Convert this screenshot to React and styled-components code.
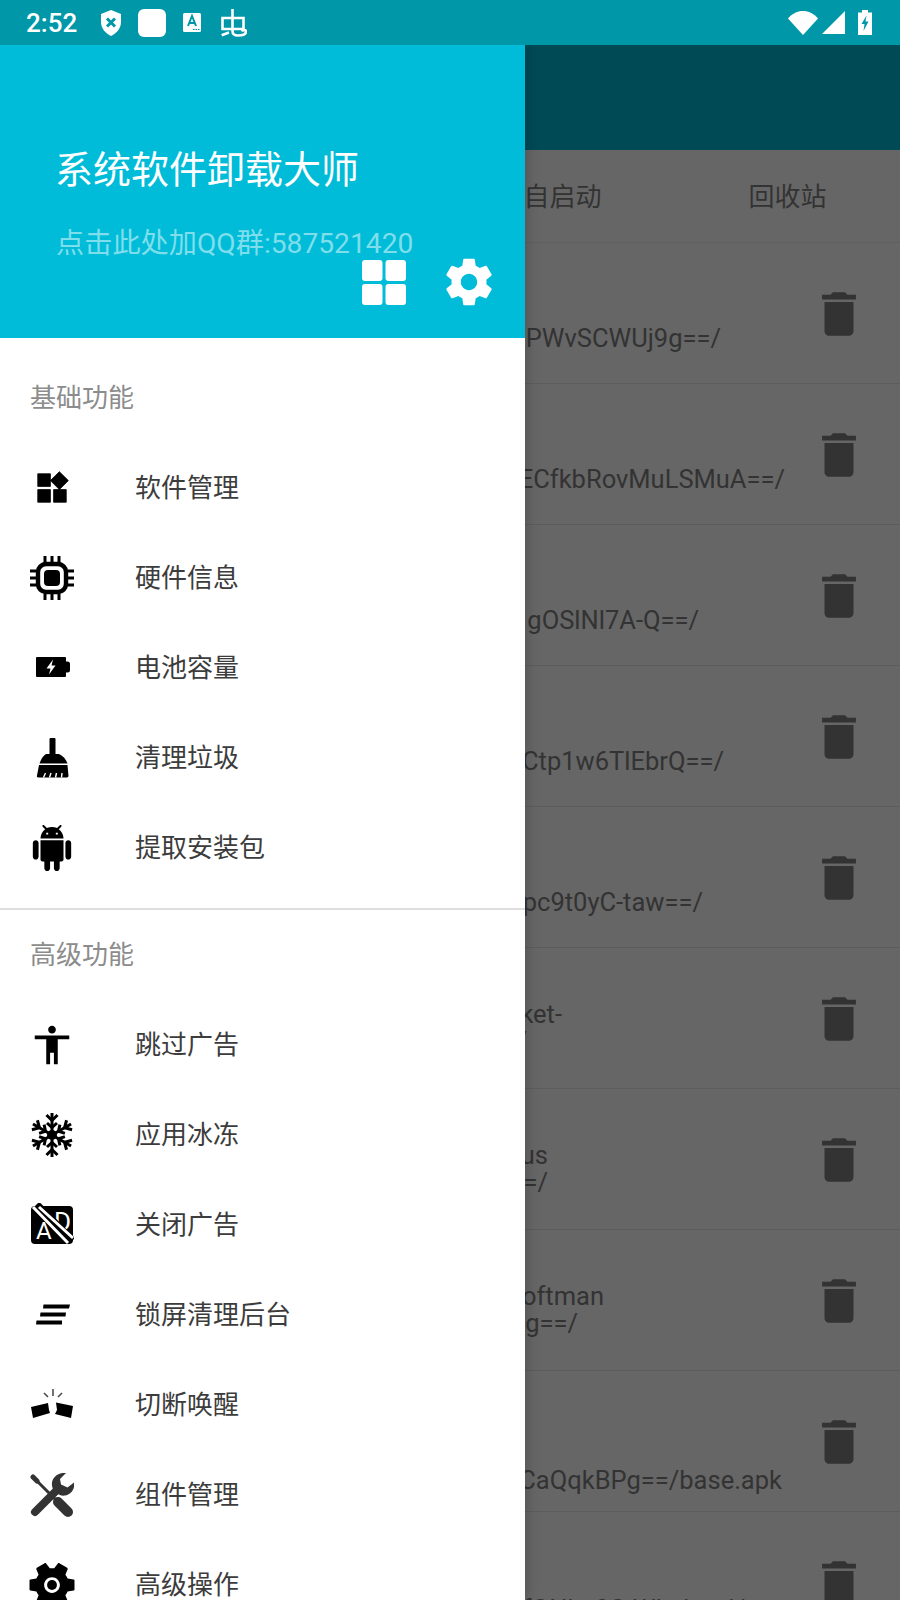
import React from "react";
import styled, { createGlobalStyle } from "styled-components";

const Global = createGlobalStyle`
  html, body { margin: 0; padding: 0; background: #666666; }
  * { box-sizing: border-box; }
`;

const FONT = `Roboto, "Noto Sans CJK SC", "Liberation Sans", sans-serif`;

const Screen = styled.div`
  position: relative;
  width: 900px;
  height: 1600px;
  overflow: hidden;
  background: #666666;
  font-family: ${FONT};
`;

const StatusBar = styled.div`
  height: 45px;
  background: #0098a9;
  display: flex;
  align-items: center;
  padding: 0 28px 0 26px;
  color: #fff;
`;

const Clock = styled.span`
  font-size: 26px;
  font-weight: 500;
  width: 75px;
`;

const StatusLeft = styled.div`
  display: flex;
  align-items: center;
  gap: 17px;
  flex: 1;
`;

const StatusRight = styled.div`
  display: flex;
  align-items: center;
  gap: 4px;
`;

const Svg = styled.svg`
  display: block;
  flex: none;
`;

const Toolbar = styled.div`
  height: 105px;
  background: #004a56;
`;

const Tabs = styled.div`
  height: 93px;
  display: grid;
  grid-template-columns: repeat(4, 225px);
  align-items: center;
  border-bottom: 1px solid #606060;
`;

const Tab = styled.div`
  font-size: 26px;
  color: #333;
  text-align: center;
  padding-bottom: 3px;
`;

const Row = styled.div`
  height: 141px;
  display: flex;
  align-items: flex-start;
  border-bottom: 1.5px solid #5c5c5c;
`;

const PathBlock = styled.div`
  flex: none;
  width: ${(p) => p.$end}px;
  padding-top: ${(p) => p.$top}px;
  text-align: right;
  font-size: 25.5px;
  line-height: 27px;
  color: #333;
  white-space: nowrap;
`;

const PathLine = styled.div`
  margin-right: ${(p) => p.$inset || 0}px;
`;

const TrashSlot = styled.div`
  margin-left: auto;
  margin-right: 32px;
  margin-top: 1.5px;
  align-self: center;
`;

const Drawer = styled.aside`
  position: absolute;
  top: 45px;
  left: 0;
  bottom: 0;
  width: 525px;
  background: #fff;
  box-shadow: 2px 0 12px rgba(0, 0, 0, 0.18);
  clip-path: inset(0 -24px 0 0);
  overflow: hidden;
`;

const DrawerHeader = styled.header`
  height: 293px;
  background: #00bcd8;
  padding: 100px 0 0 55px;
`;

const AppTitle = styled.div`
  font-size: 38px;
  line-height: 50px;
  color: #fff;
  white-space: nowrap;
`;

const QQLine = styled.div`
  margin-top: 35px;
  margin-left: 1px;
  font-size: 28.2px;
  line-height: 28px;
  color: #7fdeec;
  white-space: nowrap;
`;

const HeaderActions = styled.div`
  display: flex;
  align-items: center;
  justify-content: flex-end;
  gap: 35px;
  padding-right: 28px;
  margin-top: -4px;
`;

const Section = styled.section`
  padding-top: ${(p) => p.$top}px;
`;

const SectionTitle = styled.div`
  height: 90px;
  display: flex;
  align-items: center;
  padding: 0 0 6px 30px;
  font-size: 26px;
  color: #8c8c8c;
`;

const Item = styled.div`
  height: 90px;
  display: flex;
  align-items: center;
  font-size: 26px;
  color: #3c3c3c;
`;

const IconSlot = styled.div`
  width: 104px;
  height: 90px;
  display: flex;
  align-items: center;
  justify-content: center;
  flex: none;
`;

const ItemLabel = styled.span`
  margin-left: 31px;
  margin-bottom: 6px;
`;

const Divider = styled.div`
  height: 2px;
  margin-top: 15px;
  background: #dedede;
`;

const SETTINGS =
  "M19.43 12.98c.04-.32.07-.64.07-.98s-.03-.66-.07-.98l2.11-1.65c.19-.15.24-.42.12-.64l-2-3.46c-.12-.22-.39-.3-.61-.22l-2.49 1c-.52-.4-1.08-.73-1.69-.98l-.38-2.65C14.46 2.18 14.25 2 14 2h-4c-.25 0-.46.18-.49.42l-.38 2.65c-.61.25-1.17.59-1.69.98l-2.49-1c-.23-.09-.49 0-.61.22l-2 3.46c-.13.22-.07.49.12.64l2.11 1.65c-.04.32-.07.65-.07.98s.03.66.07.98l-2.11 1.65c-.19.15-.24.42-.12.64l2 3.46c.12.22.39.3.61.22l2.49-1c.52.4 1.08.73 1.69.98l.38 2.65c.03.24.24.42.49.42h4c.25 0 .46-.18.49-.42l.38-2.65c.61-.25 1.17-.59 1.69-.98l2.49 1c.23.09.49 0 .61-.22l2-3.46c.12-.22.07-.49-.12-.64l-2.11-1.65zM12 15.5c-1.93 0-3.5-1.57-3.5-3.5s1.57-3.5 3.5-3.5 3.5 1.57 3.5 3.5-1.57 3.5-3.5 3.5z";

const Shield = () => (
  <Svg width="20" height="26" viewBox="0 0 20 26">
    <path d="M10 0 L20 4 V12 C20 19 15 23.5 10 26 C5 23.5 0 19 0 12 V4 Z" fill="#fff" />
    <path d="M6 8.5 L14 16.5 M14 8.5 L6 16.5" stroke="#0098a9" strokeWidth="3" />
  </Svg>
);

const WhiteTile = () => (
  <Svg width="28" height="28" viewBox="0 0 28 28">
    <rect width="28" height="28" rx="6" fill="#fff" />
  </Svg>
);

const StoreIcon = () => (
  <Svg width="18" height="19" viewBox="0 0 18 19">
    <rect width="18" height="19" rx="1.5" fill="#fff" />
    <path d="M5 13 L9 3 L13 13 M6.4 10 H11.6" fill="none" stroke="#0098a9" strokeWidth="2" />
    <path d="M10 16.5 h1.5 M12.5 16.5 h1.5 M15 16.5 h1.5" stroke="#0098a9" strokeWidth="1.2" />
  </Svg>
);

const BugIcon = () => (
  <Svg width="26" height="28" viewBox="0 0 26 28" style={{ marginLeft: 3 }}>
    <path
      d="M1.5 9 H22.5 V20 H1.5 Z M11.5 0 V22 C11.5 25 13.5 26.5 17 26.5 C21 26.5 25 25.5 25 22.5 C25 20.5 22 20.5 21 22.5 M0.7 26.3 L8 23.5"
      fill="none"
      stroke="#fff"
      strokeWidth="2.6"
    />
  </Svg>
);

const Wifi = () => (
  <Svg width="30" height="24" viewBox="0 0 30 24">
    <path d="M0 7.5 C8 -2.5 22 -2.5 30 7.5 L15 24 Z" fill="#fff" />
  </Svg>
);

const Signal = () => (
  <Svg width="23" height="23" viewBox="0 0 23 23">
    <path d="M23 0 V23 H0 Z" fill="#fff" />
  </Svg>
);

const BatteryStatus = () => (
  <Svg width="14" height="25" viewBox="0 0 14 25" style={{ marginLeft: 9 }}>
    <path d="M4 0 H10 V2.5 H14 V25 H0 V2.5 H4 Z" fill="#fff" />
    <path d="M8.5 5.5 L3.5 14 H6.5 L5.5 21 L10.5 11.5 H7.5 Z" fill="#0098a9" />
  </Svg>
);

const Trash = () => (
  <Svg width="58" height="58" viewBox="0 0 24 24">
    <path
      d="M6 19c0 1.1.9 2 2 2h8c1.1 0 2-.9 2-2V7H6v12zM19 4h-3.5l-1-1h-5l-1 1H5v2h14V4z"
      fill="#333"
    />
  </Svg>
);

const GridIcon = () => (
  <Svg width="44" height="45" viewBox="0 0 44 45">
    <rect x="0" y="0" width="20.5" height="21" rx="3" fill="#fff" />
    <rect x="23.5" y="0" width="20.5" height="21" rx="3" fill="#fff" />
    <rect x="0" y="24" width="20.5" height="21" rx="3" fill="#fff" />
    <rect x="23.5" y="24" width="20.5" height="21" rx="3" fill="#fff" />
  </Svg>
);

const GearIcon = () => (
  <Svg width="56" height="56" viewBox="0 0 24 24">
    <path d={SETTINGS} fill="#fff" />
  </Svg>
);

const WidgetsIcon = () => (
  <Svg width="38" height="38" viewBox="0 0 24 24">
    <path
      d="M13 13v8h8v-8h-8zM3 21h8v-8H3v8zM3 3v8h8V3H3zm13.66-1.31L11 7.34 16.66 13l5.66-5.66-5.66-5.65z"
      fill="#000"
      stroke="#000"
      strokeWidth="0.5"
      strokeLinejoin="round"
    />
  </Svg>
);

const ChipIcon = () => (
  <Svg width="44" height="44" viewBox="0 0 44 44">
    <rect x="8" y="8" width="28" height="28" rx="8" fill="none" stroke="#000" strokeWidth="4.4" />
    <rect x="14" y="14" width="16" height="16" rx="4" fill="#000" />
    <path
      d="M15 0.5 V7 M22 0.5 V7 M29 0.5 V7 M15 37 V43.5 M22 37 V43.5 M29 37 V43.5 M0.5 15 H7 M0.5 22 H7 M0.5 29 H7 M37 15 H43.5 M37 22 H43.5 M37 29 H43.5"
      stroke="#000"
      strokeWidth="3"
      strokeLinecap="round"
    />
  </Svg>
);

const BatteryIcon = () => (
  <Svg width="44" height="44" viewBox="0 0 44 44">
    <rect x="6" y="11" width="30" height="20" rx="1" fill="#000" />
    <rect x="34" y="15.5" width="6" height="11" rx="2.5" fill="#000" />
    <path d="M23 13.5 L16.5 22.5 H20.5 L19 28.5 L25.5 19.5 H21.5 Z" fill="#fff" />
  </Svg>
);

const BroomIcon = () => (
  <Svg width="44" height="44" viewBox="0 0 44 44">
    <rect x="19.5" y="2" width="6" height="20" rx="1" fill="#000" />
    <path d="M16 18 H29 C33 20 36 23 37.5 27.5 H9.5 C11 23 13 20 16 18 Z" fill="#000" />
    <path d="M9 29 H37.5 L38.5 40 C38.5 41 37 41.5 36 41.5 H8.5 C7 41.5 6.5 40.5 7 39.5 Z" fill="#000" />
    <path
      d="M13.5 41.5 L15.5 37 M19.5 41.5 L21 37 M25.5 41.5 L26.5 37 M31.5 41.5 L32 37"
      stroke="#fff"
      strokeWidth="1.4"
    />
  </Svg>
);

const AndroidIcon = () => (
  <Svg width="46" height="46" viewBox="0 0 24 24">
    <path
      d="M6 18c0 .55.45 1 1 1h1v3.5c0 .83.67 1.5 1.5 1.5s1.5-.67 1.5-1.5V19h2v3.5c0 .83.67 1.5 1.5 1.5s1.5-.67 1.5-1.5V19h1c.55 0 1-.45 1-1V8H6v10zM3.5 8C2.67 8 2 8.67 2 9.5v7c0 .83.67 1.5 1.5 1.5S5 17.33 5 16.5v-7C5 8.67 4.33 8 3.5 8zm17 0c-.83 0-1.5.67-1.5 1.5v7c0 .83.67 1.5 1.5 1.5s1.5-.67 1.5-1.5v-7c0-.83-.67-1.5-1.5-1.5zm-4.97-5.84l1.3-1.3c.2-.2.2-.51 0-.71-.2-.2-.51-.2-.71 0l-1.48 1.48C13.85 1.23 12.95 1 12 1c-.96 0-1.86.23-2.66.63L7.85.15c-.2-.2-.51-.2-.71 0-.2.2-.2.51 0 .71l1.31 1.31C6.97 3.26 6 5.01 6 7h12c0-1.99-.97-3.75-2.47-4.84zM10 5H9V4h1v1zm5 0h-1V4h1v1z"
      fill="#000"
    />
  </Svg>
);

const PersonIcon = () => (
  <Svg width="46" height="46" viewBox="0 0 24 24">
    <path
      d="M12 2c1.1 0 2 .9 2 2s-.9 2-2 2-2-.9-2-2 .9-2 2-2zm9 5v2h-6v13h-2v-6h-2v6H9V9H3V7h18z"
      fill="#000"
    />
  </Svg>
);

const SnowIcon = () => (
  <Svg width="44" height="46" viewBox="-22 -23 44 46">
    {[0, 60, 120, 180, 240, 300].map((a) => (
      <g key={a} transform={`rotate(${a})`} stroke="#000" strokeWidth="3" fill="none">
        <path d="M0 0 V-22" />
        <path d="M-5.5 -20 L0 -14.5 L5.5 -20" />
        <path d="M-5 -12 L0 -7.5 L5 -12" />
      </g>
    ))}
    <circle r="5" fill="#000" />
  </Svg>
);

const AdOffIcon = () => (
  <Svg width="44" height="44" viewBox="0 0 44 44">
    <rect x="1" y="3" width="42" height="38" rx="4" fill="#000" />
    <text x="6" y="36" fontFamily="Roboto, sans-serif" fontSize="24" fill="#fff">A</text>
    <text x="24" y="28" fontFamily="Roboto, sans-serif" fontSize="26" fill="#fff">D</text>
    <path d="M6 2 L42 38" stroke="#000" strokeWidth="9" />
    <path d="M3 4 L38 40 M9 4 L43 35" stroke="#fff" strokeWidth="3" />
  </Svg>
);

const LinesIcon = () => (
  <Svg width="44" height="44" viewBox="0 0 44 44">
    <path d="M13.5 11.5 H40 L39 15.5 H13 Z M10.5 19.5 H36 L35.5 23.5 H10 Z M6.5 27.5 H32 V31.5 H6 Z" fill="#000" />
  </Svg>
);

const BreakIcon = () => (
  <Svg width="44" height="44" viewBox="0 0 44 44">
    <path d="M1 24 L18 20 L19 27 L20 30 L3 35 Z M26 19.5 L43 23 L41 35 L25 31 L27 27 Z" fill="#000" />
    <path d="M23 6 V13 M14 10 L18 14 M32 10 L28 14" stroke="#444" strokeWidth="1.5" />
  </Svg>
);

const ToolsIcon = () => (
  <Svg width="44" height="44" viewBox="0 0 44 44">
    <g fill="none" stroke="#333" strokeLinecap="round">
      <path d="M3 4 L26 27" strokeWidth="3" />
      <path d="M3 4 L7 8" strokeWidth="5" />
      <path d="M28 29 L38 39" strokeWidth="10" />
      <path d="M5 39 L27 17" strokeWidth="8" />
    </g>
    <path
      d="M36 0 C28 -1 21 5 22 12.5 C22.5 18.5 29 23.5 35 22.5 C41 21.5 45 16 44.5 9 L37.5 14.5 L31 11.5 L30 6 Z"
      fill="#333"
    />
  </Svg>
);

const AdvancedIcon = () => (
  <Svg width="54" height="54" viewBox="0 0 24 24">
    <g transform="rotate(90 12 12)">
      <path d={SETTINGS} fill="#000" />
      <circle cx="12" cy="12" r="2.2" fill="#000" />
    </g>
  </Svg>
);

const rows = [
  { top: 82, end: 721, lines: ["PWvSCWUj9g==/"] },
  { top: 82, end: 785, lines: ["ECfkbRovMuLSMuA==/"] },
  { top: 82, end: 699, lines: ["gOSlNl7A-Q==/"] },
  { top: 82, end: 724, lines: ["Ctp1w6TlEbrQ==/"] },
  { top: 82, end: 703, lines: ["pc9t0yC-taw==/"] },
  { top: 53, end: 562, lines: ["ket-", "/"], inset: 35 },
  { top: 53, end: 548, lines: ["us", "=/"] },
  { top: 53, end: 604, lines: ["oftman", "g==/"], inset: 26 },
  { top: 96, end: 782, lines: ["CaQqkBPg==/base.apk"] },
  { top: 84, end: 745, lines: ["fQNkp0C-WIxdgtrd/"] },
];

const basics = [
  [WidgetsIcon, "软件管理"],
  [ChipIcon, "硬件信息"],
  [BatteryIcon, "电池容量"],
  [BroomIcon, "清理垃圾"],
  [AndroidIcon, "提取安装包"],
];

const advanced = [
  [PersonIcon, "跳过广告"],
  [SnowIcon, "应用冰冻"],
  [AdOffIcon, "关闭广告"],
  [LinesIcon, "锁屏清理后台"],
  [BreakIcon, "切断唤醒"],
  [ToolsIcon, "组件管理"],
  [AdvancedIcon, "高级操作"],
];

const MenuItems = ({ items }) =>
  items.map(([Icon, label]) => (
    <Item key={label}>
      <IconSlot>
        <Icon />
      </IconSlot>
      <ItemLabel>{label}</ItemLabel>
    </Item>
  ));

export default function App() {
  return (
    <Screen>
      <Global />
      <StatusBar>
        <Clock>2:52</Clock>
        <StatusLeft>
          <Shield />
          <WhiteTile />
          <StoreIcon />
          <BugIcon />
        </StatusLeft>
        <StatusRight>
          <Wifi />
          <Signal />
          <BatteryStatus />
        </StatusRight>
      </StatusBar>
      <Toolbar />
      <Tabs>
        <Tab />
        <Tab />
        <Tab>自启动</Tab>
        <Tab>回收站</Tab>
      </Tabs>
      {rows.map((r) => (
        <Row key={r.lines[0]}>
          <PathBlock $top={r.top} $end={r.end}>
            {r.lines.map((l, i) => (
              <PathLine key={l} $inset={i === 1 ? r.inset : 0}>
                {l}
              </PathLine>
            ))}
          </PathBlock>
          <TrashSlot>
            <Trash />
          </TrashSlot>
        </Row>
      ))}
      <Drawer>
        <DrawerHeader>
          <AppTitle>系统软件卸载大师</AppTitle>
          <QQLine>点击此处加QQ群:587521420</QQLine>
          <HeaderActions>
            <GridIcon />
            <GearIcon />
          </HeaderActions>
        </DrawerHeader>
        <Section $top={15}>
          <SectionTitle>基础功能</SectionTitle>
          <MenuItems items={basics} />
        </Section>
        <Divider />
        <Section $top={0}>
          <SectionTitle>高级功能</SectionTitle>
          <MenuItems items={advanced} />
        </Section>
      </Drawer>
    </Screen>
  );
}
